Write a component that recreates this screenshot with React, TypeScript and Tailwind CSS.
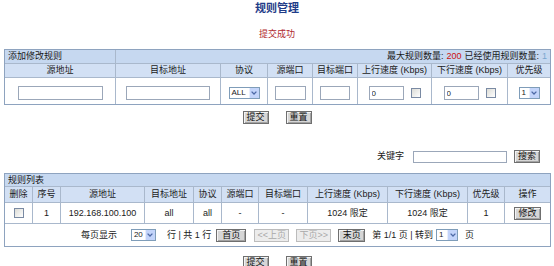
import React from 'react';

const Btn = ({ children, w = 'w-[26px]', disabled = false }: { children: React.ReactNode; w?: string; disabled?: boolean }) => (
  <button
    className={`${w} h-[13px] flex items-center justify-center border text-[9px] leading-none ${
      disabled
        ? 'border-[#bcbcbc] bg-[#ececec] text-[#a9a9a9]'
        : 'border-[#6f6f6f] bg-[#d6d6d6] text-[#111] shadow-[inset_1px_1px_0_#f4f4f4,inset_-1px_-1px_0_#a3a3a3]'
    }`}
  >
    {children}
  </button>
);

const Sel = ({ value, w }: { value: string; w: string }) => (
  <div className={`${w} h-[12px] flex items-center border border-[#7f9db9] bg-white`}>
    <span className="flex-1 pl-[2px] text-[8px] leading-none">{value}</span>
    <span className="w-[10px] h-full flex items-center justify-center bg-[#c3d4fa] border-l border-[#e8eefc]">
      <svg width="6" height="4" viewBox="0 0 6 4">
        <path d="M0.6 0.6 L3 3 L5.4 0.6" stroke="#4d69a6" strokeWidth="1.3" fill="none" />
      </svg>
    </span>
  </div>
);

const Inp = ({ w, value = '' }: { w: string; value?: string }) => (
  <input
    readOnly
    value={value}
    className={`${w} h-[14px] border border-[#9ba7b9] bg-white pl-[2px] text-[8px] leading-none outline-none`}
  />
);

const Chk = () => <span className="w-[10px] h-[10px] border border-[#7a8aa3] bg-linear-to-br from-[#dcdcd6] to-white" />;

const hdr = 'bg-[#d2e0f4] flex items-center justify-center';
const cell = 'bg-white flex items-center justify-center';

export default function App() {
  return (
    <div className="w-[554px] h-[266px] overflow-hidden bg-white text-[9px] text-[#1a1a1a] font-['Liberation_Sans','Noto_Sans_CJK_SC',sans-serif]">
      <div className="pt-[2px] text-center text-[11px] leading-[12px] font-bold text-[#1f3c88]">规则管理</div>
      <div className="mt-[15px] text-center leading-[10px] text-[#b0282e]">提交成功</div>

      {/* add / edit rule */}
      <div className="mt-[10px] ml-[4px] w-[547px] grid grid-cols-[110px_104px_46px_44px_44px_73px_75px_42px] gap-px bg-[#a9b8cc] border border-[#8ea3bf] leading-none">
        <div className="h-[13px] bg-[#c6d8f0] flex items-center pl-[3px]">添加修改规则</div>
        <div className="col-span-7 bg-[#c6d8f0] flex items-center justify-end pr-[3px]">
          最大规则数量: <span className="text-[#cc1010] mx-[3px]">200</span> 已经使用规则数量: <span className="text-[#7aa6cf] ml-[3px]">1</span>
        </div>

        <div className={`${hdr} h-[13px]`}>源地址</div>
        <div className={hdr}>目标地址</div>
        <div className={hdr}>协议</div>
        <div className={hdr}>源端口</div>
        <div className={hdr}>目标端口</div>
        <div className={hdr}>上行速度 (Kbps)</div>
        <div className={hdr}>下行速度 (Kbps)</div>
        <div className={hdr}>优先级</div>

        <div className={`${cell} h-[26px] pt-[4px]`}><Inp w="w-[85px]" /></div>
        <div className={`${cell} pt-[4px]`}><Inp w="w-[84px]" /></div>
        <div className={`${cell} pt-[4px]`}><Sel value="ALL" w="w-[31px]" /></div>
        <div className={`${cell} pt-[4px]`}><Inp w="w-[31px]" /></div>
        <div className={`${cell} pt-[4px]`}><Inp w="w-[30px]" /></div>
        <div className={`${cell} pt-[4px] gap-[7px]`}><Inp w="w-[35px]" value="0" /><Chk /></div>
        <div className={`${cell} pt-[4px] gap-[7px]`}><Inp w="w-[35px]" value="0" /><Chk /></div>
        <div className={`${cell} pt-[4px]`}><Sel value="1" w="w-[21px]" /></div>
      </div>

      <div className="mt-[6px] flex justify-center gap-[17px]">
        <Btn>提交</Btn>
        <Btn>重置</Btn>
      </div>

      <div className="mt-[26px] flex items-center justify-end pr-[14px] leading-none">
        <span>关键字</span>
        <input readOnly className="ml-[9px] w-[94px] h-[12px] border border-[#9ba7b9] bg-white outline-none" />
        <span className="ml-[7px]"><Btn>搜索</Btn></span>
      </div>

      {/* rule list */}
      <div className="mt-[10px] ml-[4px] w-[547px] grid grid-cols-[27px_27px_83px_48px_27px_36px_48px_79px_79px_36px_45px] gap-px bg-[#a9b8cc] border border-[#8ea3bf] leading-none">
        <div className="col-span-11 h-[12px] bg-[#c6d8f0] flex items-center pl-[3px]">规则列表</div>

        <div className={`${hdr} h-[15px]`}>删除</div>
        <div className={hdr}>序号</div>
        <div className={hdr}>源地址</div>
        <div className={hdr}>目标地址</div>
        <div className={hdr}>协议</div>
        <div className={hdr}>源端口</div>
        <div className={hdr}>目标端口</div>
        <div className={hdr}>上行速度 (Kbps)</div>
        <div className={hdr}>下行速度 (Kbps)</div>
        <div className={hdr}>优先级</div>
        <div className={hdr}>操作</div>

        <div className={`${cell} h-[20px]`}><Chk /></div>
        <div className={cell}>1</div>
        <div className={cell}>192.168.100.100</div>
        <div className={cell}>all</div>
        <div className={cell}>all</div>
        <div className={cell}>-</div>
        <div className={cell}>-</div>
        <div className={cell}>1024 限定</div>
        <div className={cell}>1024 限定</div>
        <div className={cell}>1</div>
        <div className={cell}><Btn w="w-[27px]">修改</Btn></div>

        <div className="col-span-11 h-[22px] bg-white flex items-center justify-center">
          <span>每页显示</span>
          <span className="ml-[14px]"><Sel value="20" w="w-[25px]" /></span>
          <span className="ml-[11px]">行 | 共 1 行</span>
          <span className="ml-[5px]"><Btn w="w-[30px]">首页</Btn></span>
          <span className="ml-[8px]"><Btn w="w-[35px]" disabled>&lt;&lt;上页</Btn></span>
          <span className="ml-[7px]"><Btn w="w-[35px]" disabled>下页&gt;&gt;</Btn></span>
          <span className="ml-[7px]"><Btn w="w-[27px]">末页</Btn></span>
          <span className="ml-[7px]">第 1/1 页 | 转到</span>
          <span className="ml-[3px]"><Sel value="1" w="w-[22px]" /></span>
          <span className="ml-[7px]">页</span>
        </div>
      </div>

      <div className="mt-[9px] flex justify-center gap-[17px]">
        <Btn>提交</Btn>
        <Btn>重置</Btn>
      </div>
    </div>
  );
}
